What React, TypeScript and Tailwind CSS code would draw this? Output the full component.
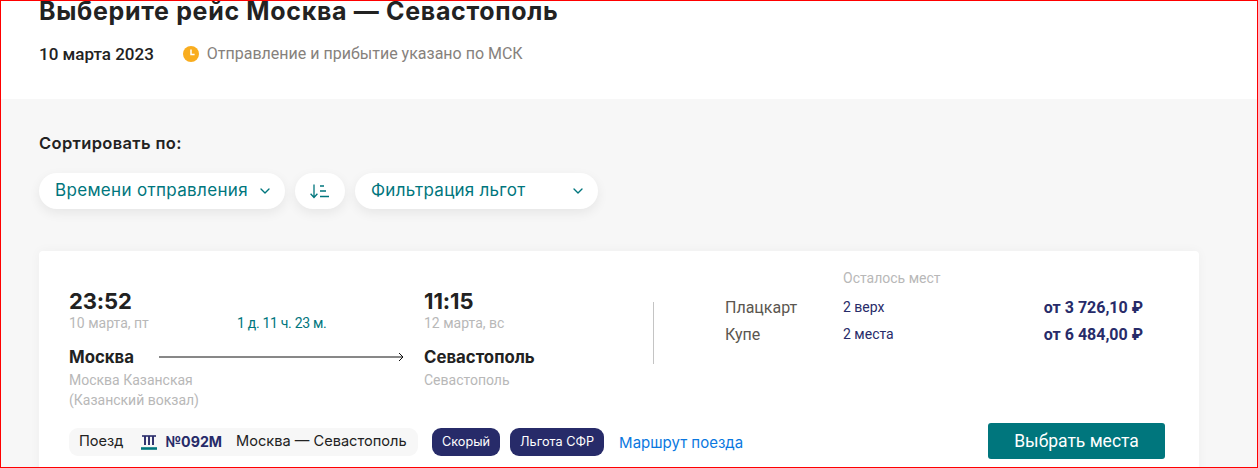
import { ChevronDown } from 'lucide-react'

const inter = "font-['Inter',sans-serif]"
const roboto = "font-['Roboto',sans-serif]"

function SortIcon() {
  return (
    <svg width="20" height="15" viewBox="0 0 20 15" fill="none" stroke="#00767d" strokeWidth="1.3">
      <path d="M4 0.5v13M0.6 9.8 4 13.5l3.4-3.7" />
      <path d="M10 2h4M10 7h6M10 12.5h9" />
    </svg>
  )
}

function TrainIcon() {
  return (
    <svg width="16" height="15" viewBox="0 0 16 15" className="shrink-0">
      <path d="M1 1h14" stroke="#2a2c6b" strokeWidth="1.6" />
      <path d="M4 1v9M8 1v9M12 1v9" stroke="#2a2c6b" strokeWidth="1.9" />
      <path d="M0 13.5h16" stroke="#00767d" strokeWidth="2.6" />
    </svg>
  )
}

function ClockIcon() {
  return (
    <svg width="16" height="16" viewBox="0 0 16 16" className="shrink-0">
      <circle cx="8" cy="8" r="8" fill="#f9ad1f" />
      <path d="M8 3.6V8.4H11.6" fill="none" stroke="#fff" strokeWidth="1.5" />
    </svg>
  )
}

function Tag({ children }: { children: string }) {
  return (
    <span className={`${inter} flex h-[28px] items-center rounded-[9px] bg-[#272b69] px-[10px] text-[12.7px] text-white`}>
      {children}
    </span>
  )
}

export default function App() {
  return (
    <div className="flex h-[468px] w-[1258px] flex-col overflow-hidden border border-[#ff0000] bg-[#f7f7f7]">
      {/* Header */}
      <div className="h-[98px] shrink-0 bg-white pl-[38px]">
        <h1 className={`${inter} text-[25px] leading-[21px] font-bold tracking-[0.67px] text-[#222222]`}>
          Выберите рейс Москва — Севастополь
        </h1>
        <div className="mt-[20px] flex items-center">
          <span className={`${roboto} text-[17px] leading-[24px] font-medium text-[#222222]`}>10 марта 2023</span>
          <span className="ml-[29px]">
            <ClockIcon />
          </span>
          <span className={`${roboto} ml-[8px] text-[16px] leading-[24px] text-[#86817c]`}>
            Отправление и прибытие указано по МСК
          </span>
        </div>
      </div>

      <div className="flex-1 px-[38px] pt-[32px]">
        {/* Sort */}
        <div className={`${inter} text-[16.5px] leading-[24px] font-semibold tracking-[0.35px] text-[#222222]`}>Сортировать по:</div>
        <div className="mt-[18px] flex gap-[10px]">
          <div className={`${inter} flex h-[36px] w-[246px] items-center justify-between rounded-[18px] bg-white pr-[12px] pl-[16px] text-[17px] tracking-[0.33px] text-[#00767d] shadow-[0_4px_12px_rgba(0,0,0,0.07)]`}>
            Времени отправления
            <ChevronDown size={16} strokeWidth={2} />
          </div>
          <div className="flex h-[36px] w-[50px] items-center justify-center rounded-[18px] bg-white shadow-[0_4px_12px_rgba(0,0,0,0.07)]">
            <SortIcon />
          </div>
          <div className={`${inter} flex h-[36px] w-[243px] items-center justify-between rounded-[18px] bg-white pr-[12px] pl-[16px] text-[17px] tracking-[0.25px] text-[#00767d] shadow-[0_4px_12px_rgba(0,0,0,0.07)]`}>
            Фильтрация льгот
            <ChevronDown size={16} strokeWidth={2} />
          </div>
        </div>

        {/* Card */}
        <div className="mt-[42px] h-[240px] w-[1160px] rounded-[4px] bg-white pt-[19px] pr-[34px] pl-[30px] shadow-[0_0_12px_rgba(0,0,0,0.04)]">
          <div className="flex h-[153px]">
            <div className="w-[584px] pt-[16px]">
              <div className="flex">
                <div className="w-[355px]">
                  <div className={`${inter} text-[22px] leading-[30px] font-bold tracking-[-0.1px] text-[#222222]`}>23:52</div>
                  <div className="-mt-[1px] flex">
                    <span className={`${roboto} w-[168px] text-[14px] leading-[16px] text-[#b8b8b8]`}>10 марта, пт</span>
                    <span className={`${roboto} text-[14px] leading-[16px] tracking-[-0.3px] text-[#00767d]`}>1 д. 11 ч. 23 м.</span>
                  </div>
                </div>
                <div>
                  <div className={`${inter} text-[22px] leading-[30px] font-bold tracking-[-0.1px] text-[#222222]`}>11:15</div>
                  <div className={`${roboto} -mt-[1px] text-[14px] leading-[16px] text-[#b8b8b8]`}>12 марта, вс</div>
                </div>
              </div>
              <div className="mt-[14px] flex items-center">
                <span className={`${inter} w-[90px] text-[16.8px] leading-[24px] font-bold text-[#222222]`}>Москва</span>
                <svg width="245" height="10" viewBox="0 0 245 10" fill="none" stroke="#111" className="shrink-0">
                  <path d="M0 5h244M240 1l4 4-4 4" />
                </svg>
                <span className={`${inter} ml-[20px] text-[16.8px] leading-[24px] font-bold text-[#222222]`}>Севастополь</span>
              </div>
              <div className="mt-[1px] flex">
                <div className={`${roboto} w-[355px] text-[14px] leading-[20px] text-[#b8b8b8]`}>
                  Москва Казанская
                  <br />
                  (Казанский вокзал)
                </div>
                <div className={`${roboto} text-[14px] leading-[20px] text-[#b8b8b8]`}>Севастополь</div>
              </div>
            </div>

            {/* Places */}
            <div className="mt-[32px] h-[62px] w-px bg-[#c4c4c4]" />
            <div className="-mt-[2px] ml-[71px] w-[418px]">
              <div className={`${roboto} ml-[118px] text-[14px] leading-[20px] text-[#b8b8b8]`}>Осталось мест</div>
              <div className="mt-[6px] flex h-[27px] items-center">
                <span className={`${roboto} w-[118px] text-[16px] text-[#5b5650]`}>Плацкарт</span>
                <span className={`${roboto} text-[14px] text-[#272b69]`}>2 верх</span>
                <span className={`${roboto} ml-auto text-[16px] font-bold text-[#272b69]`}>от 3 726,10 ₽</span>
              </div>
              <div className="flex h-[27px] items-center">
                <span className={`${roboto} w-[118px] text-[16px] text-[#5b5650]`}>Купе</span>
                <span className={`${roboto} text-[14px] text-[#272b69]`}>2 места</span>
                <span className={`${roboto} ml-auto text-[16px] font-bold text-[#272b69]`}>от 6 484,00 ₽</span>
              </div>
            </div>
          </div>

          {/* Train row */}
          <div className="flex items-center">
            <div className={`${inter} mt-[2px] flex h-[28px] w-[349px] items-center rounded-[9px] bg-[#f7f7f7] pl-[10px] text-[14.6px] text-[#222222]`}>
              Поезд
              <span className="ml-[18px]">
                <TrainIcon />
              </span>
              <span className="ml-[8px] text-[14.2px] font-bold text-[#272b69]">№092М</span>
              <span className="ml-[14px]">Москва — Севастополь</span>
            </div>
            <div className="mt-[2px] ml-[14px] flex gap-[10px]">
              <Tag>Скорый</Tag>
              <Tag>Льгота СФР</Tag>
            </div>
            <span className={`${inter} mt-[4px] ml-[15px] text-[15px] text-[#0a78e0]`}>Маршрут поезда</span>
            <div className={`${roboto} ml-auto flex h-[36px] w-[177px] items-center justify-center rounded-[3px] bg-[#00767d] text-[17.5px] text-white`}>
              Выбрать места
            </div>
          </div>
        </div>
      </div>
    </div>
  )
}
